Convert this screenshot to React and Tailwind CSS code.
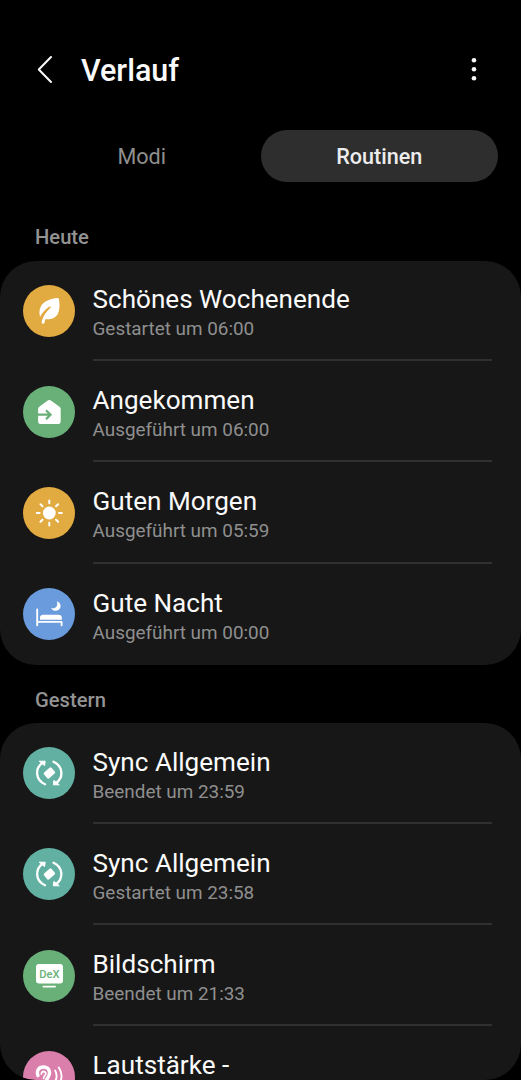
const ICONS = {
    leaf: {
        color: 'bg-[#e2ab41]',
        art: (
            <>
                <path d="M34.6 13.1C28 13.6 20.4 16.4 17.8 21.4C16 25 16.2 29 17.1 31.8C19.3 27.8 22.6 24 26.6 21.6C27.4 21.2 28.2 22 27.5 22.8C23.4 26.6 20 31 18.7 36.8C18.3 39.1 21 39.5 21.5 37.6L22.3 34.2C27.5 35 32.8 33 35 28.4C37 23.8 36.6 18.4 36 14.4Q35.8 13.1 34.6 13.1Z" fill="#fff" />
            </>
        ),
    },
    arrive: {
        color: 'bg-[#69b078]',
        art: (
            <>
                <path d="M24.7 14.6Q26.3 13.4 27.9 14.6L36.5 20.7Q37.7 21.6 37.7 23V35.2Q37.7 38 34.9 38H17.9Q15.1 38 15.1 35.2V23Q15.1 21.6 16.3 20.7Z" fill="#fff" />
                <path d="M14.6 28.7H27M23 24.3L27.5 28.7L23 33.1" fill="none" stroke="#69b078" strokeWidth="2.3" />
            </>
        ),
    },
    sun: {
        color: 'bg-[#e2ab41]',
        art: (
            <>
                <circle cx="26.3" cy="26" r="6.4" fill="#fff" />
                <path d="M26.3 13.5V16.3M26.3 35.7V38.5M13.8 26H16.6M36 26H38.8M17.5 17.2L19.5 19.2M33.1 32.8L35.1 34.8M17.5 34.8L19.5 32.8M33.1 19.2L35.1 17.2" stroke="#fff" strokeWidth="2" strokeLinecap="round" />
            </>
        ),
    },
    bed: {
        color: 'bg-[#6a9bdc]',
        art: (
            <>
                <path d="M14.2 21.5V37.2M14.2 33.9H38.6V37.2" fill="none" stroke="#fff" strokeWidth="1.9" strokeLinecap="round" strokeLinejoin="round" />
                <path d="M17 31.7V29.5Q17.2 26.7 20.2 26.7H35.5Q38.6 26.7 38.8 29.5V31.7Z" fill="#fff" />
                <path d="M33.7 13.2C38.2 14.6 38.8 19.4 35.7 21.8C33 23.8 29.4 22.8 28.1 20C32.8 21.2 35.6 17.5 33.7 13.2Z" fill="#fff" />
            </>
        ),
    },
    sync: {
        color: 'bg-[#62b0a1]',
        art: (
            <>
                <path d="M22 37.2C12.5 33 11.5 21.5 19.6 15.8M30.5 14.8C40 19 41 30.5 32.9 36.2" fill="none" stroke="#fff" strokeWidth="2.3" strokeLinecap="round" />
                <path d="M16.2 14.2H22.2L21.6 18.6ZM36.3 37.8H30.3L30.9 33.4Z" fill="#fff" stroke="#fff" strokeWidth="1" strokeLinejoin="round" />
                <rect x="21.4" y="22.2" width="10" height="7.6" rx="1.4" transform="rotate(-42 26.4 26)" fill="#fff" />
            </>
        ),
    },
    dex: {
        color: 'bg-[#69b078]',
        art: (
            <>
                <rect x="13" y="14" width="27" height="19.4" rx="3" fill="#fff" />
                <text x="26.5" y="27.8" textAnchor="middle" fontSize="11.4" fontWeight="500" textLength="20.4" lengthAdjust="spacingAndGlyphs" fill="#69b078">DeX</text>
                <path d="M20.4 36.6H32" stroke="#fff" strokeWidth="1.9" strokeLinecap="round" />
            </>
        ),
    },
    ear: {
        color: 'bg-[#da7eac]',
        art: (
            <>
                <path d="M15 24.6C13 19 16.4 16 20.4 16C25 16 27 19.4 26.4 23C25.8 26.6 23.4 27.4 22.6 31.5C21.8 35.6 16.5 36 16 32" fill="none" stroke="#fff" strokeWidth="3.4" strokeLinecap="round" />
                <path d="M18.4 23.2C18 19.8 22.8 19.6 22.8 22.6C22.8 24.8 20.4 24.4 20.6 27.4" fill="none" stroke="#fff" strokeWidth="1.8" strokeLinecap="round" />
                <path d="M32.2 19.6C34 23 34 27 32.2 30.4M35.8 16.6C39.2 21.8 39.2 28.2 35.8 33.4" fill="none" stroke="#fff" strokeWidth="1.9" strokeLinecap="round" />
            </>
        ),
    },
};

const today = [
    { icon: 'leaf', title: 'Schönes Wochenende', status: 'Gestartet um 06:00' },
    { icon: 'arrive', title: 'Angekommen', status: 'Ausgeführt um 06:00' },
    { icon: 'sun', title: 'Guten Morgen', status: 'Ausgeführt um 05:59' },
    { icon: 'bed', title: 'Gute Nacht', status: 'Ausgeführt um 00:00' },
];

const yesterday = [
    { icon: 'sync', title: 'Sync Allgemein', status: 'Beendet um 23:59' },
    { icon: 'sync', title: 'Sync Allgemein', status: 'Gestartet um 23:58' },
    { icon: 'dex', title: 'Bildschirm', status: 'Beendet um 21:33' },
    { icon: 'ear', title: 'Lautstärke -' },
];

function RoutineRow({ item, last }) {
    const icon = ICONS[item.icon];
    return (
        <li className="flex h-[101.2px] shrink-0 pb-[0.5px] pl-[23px] pr-[29px]">
            <span className={`mt-6 h-[52px] w-[52px] shrink-0 rounded-full ${icon.color}`}>
                <svg viewBox="0 0 52 52" className="h-full w-full">{icon.art}</svg>
            </span>
            <div className={`ml-[17.5px] flex-1 pt-[22.5px] ${last ? '' : 'border-b-2 border-[#303030]'}`}>
                <div className="text-[26.1px] leading-8 text-[#fafafa]">{item.title}</div>
                {item.status && (
                    <div className="mt-0.5 text-[18.9px] leading-6 text-[#8f8f8f]">{item.status}</div>
                )}
            </div>
        </li>
    );
}

function Section({ label, items, className, listClassName = '' }) {
    return (
        <section className={className}>
            <h2 className="pl-[35px] text-[20.2px] leading-6 font-medium text-[#939393]">{label}</h2>
            <ul className={`mt-[11.5px] overflow-hidden rounded-[36px] bg-[#171717] ${listClassName}`}>
                {items.map((item, i) => (
                    <RoutineRow key={i} item={item} last={i === items.length - 1} />
                ))}
            </ul>
        </section>
    );
}

export default function App() {
    return (
        <main className="h-[1080px] w-[521px] overflow-hidden bg-black font-[Roboto,sans-serif]">
            <header className="flex h-[130px] items-start pt-[50px] pl-[35px] pr-[37px]">
                <button type="button" aria-label="Zurück" className="mt-[5px]">
                    <svg viewBox="0 0 20 30" className="h-[30px] w-5" fill="none" stroke="#fafafa" strokeWidth="2" strokeLinecap="round" strokeLinejoin="round">
                        <path d="M16 2L3.8 14.5L16 27" />
                    </svg>
                </button>
                <h1 className="ml-[26px] flex-1 pt-px text-[30.5px] leading-10 font-medium text-[#fafafa]">Verlauf</h1>
                <button type="button" aria-label="Weitere Optionen" className="mt-[5px]">
                    <svg viewBox="0 0 20 30" className="h-[30px] w-5" fill="#fafafa">
                        <circle cx="10" cy="5.3" r="2.3" />
                        <circle cx="10" cy="14.3" r="2.3" />
                        <circle cx="10" cy="23.3" r="2.3" />
                    </svg>
                </button>
            </header>
            <nav className="grid h-[52px] grid-cols-2 px-[23px] text-[21.6px]">
                <button type="button" className="pt-[3px] text-[#8f8f8f]">Modi</button>
                <button type="button" className="rounded-full bg-[#2e2e2e] pt-[3px] font-medium text-[#ececec]">Routinen</button>
            </nav>
            <Section label="Heute" items={today} className="pt-[43px]" />
            <Section label="Gestern" items={yesterday} className="pt-[22.5px]" listClassName="h-[357px]" />
        </main>
    );
}
